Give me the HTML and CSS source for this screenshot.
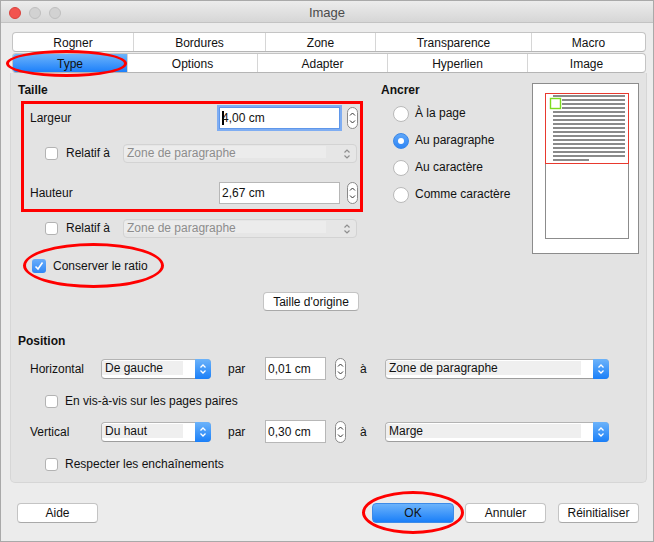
FILE: index.html
```html
<!DOCTYPE html>
<html lang="fr">
<head>
<meta charset="utf-8">
<title>Image</title>
<link rel="stylesheet" href="styles.css">
</head>
<body>
<div class="window">
  <div class="titlebar">
    <div class="lights"><span class="light red"></span><span class="light"></span><span class="light"></span></div>
    <div class="title">Image</div>
    <div></div>
  </div>

  <div class="tabs">
    <div class="tabrow r1">
      <div class="tab">Rogner</div>
      <div class="tab">Bordures</div>
      <div class="tab">Zone</div>
      <div class="tab">Transparence</div>
      <div class="tab">Macro</div>
    </div>
    <div class="tabrow r2">
      <div class="tab active">Type</div>
      <div class="tab">Options</div>
      <div class="tab">Adapter</div>
      <div class="tab">Hyperlien</div>
      <div class="tab">Image</div>
    </div>
  </div>

  <div class="panel">
    <div class="top">
      <section class="taille">
        <div class="h">Taille</div>
        <div class="row r-field first">
          <span class="lbl">Largeur</span>
          <div class="field focus w121"><span class="caret"></span>4,00 cm</div>
          <svg class="stepper" viewBox="0 0 11 22"><rect x="0.5" y="0.5" width="10" height="21" rx="5" fill="#fff" stroke="#8a8a8a"/><polyline points="3,8.5 5.5,6 8,8.5" fill="none" stroke="#333" stroke-width="1"/><polyline points="3,13.5 5.5,16 8,13.5" fill="none" stroke="#333" stroke-width="1"/></svg>
        </div>
        <div class="row r-rel">
          <span class="cb"></span><span class="rel-lbl">Relatif à</span>
          <div class="dsel w234"><span class="dtxt">Zone de paragraphe</span>
            <svg class="dchev" viewBox="0 0 8 12"><polyline points="1.5,4.5 4,2 6.5,4.5" fill="none" stroke="#8e8e8e" stroke-width="1.2"/><polyline points="1.5,7.5 4,10 6.5,7.5" fill="none" stroke="#8e8e8e" stroke-width="1.2"/></svg>
          </div>
        </div>
        <div class="row r-field second">
          <span class="lbl">Hauteur</span>
          <div class="field w121">2,67 cm</div>
          <svg class="stepper" viewBox="0 0 11 22"><rect x="0.5" y="0.5" width="10" height="21" rx="5" fill="#fff" stroke="#8a8a8a"/><polyline points="3,8.5 5.5,6 8,8.5" fill="none" stroke="#333" stroke-width="1"/><polyline points="3,13.5 5.5,16 8,13.5" fill="none" stroke="#333" stroke-width="1"/></svg>
        </div>
        <div class="row r-rel">
          <span class="cb"></span><span class="rel-lbl">Relatif à</span>
          <div class="dsel w234"><span class="dtxt">Zone de paragraphe</span>
            <svg class="dchev" viewBox="0 0 8 12"><polyline points="1.5,4.5 4,2 6.5,4.5" fill="none" stroke="#8e8e8e" stroke-width="1.2"/><polyline points="1.5,7.5 4,10 6.5,7.5" fill="none" stroke="#8e8e8e" stroke-width="1.2"/></svg>
          </div>
        </div>
        <div class="row r-ratio">
          <span class="cb checked"><svg viewBox="0 0 14 14"><polyline points="3.5,7.5 6,10 10.5,3.5" fill="none" stroke="#fff" stroke-width="1.6"/></svg></span>
          <span class="ratio-lbl">Conserver le ratio</span>
        </div>
        <div class="row r-orig">
          <div class="btn orig">Taille d'origine</div>
        </div>
      </section>

      <section class="ancrer">
        <div class="h">Ancrer</div>
        <div class="radio-row"><span class="radio"></span><span class="rlbl">À la page</span></div>
        <div class="radio-row"><span class="radio on"></span><span class="rlbl">Au paragraphe</span></div>
        <div class="radio-row"><span class="radio"></span><span class="rlbl">Au caractère</span></div>
        <div class="radio-row"><span class="radio"></span><span class="rlbl">Comme caractère</span></div>
      </section>

      <svg class="preview" viewBox="0 0 107 171">
        <rect x="0.5" y="0.5" width="106" height="170" fill="#fff" stroke="#8c8c8c"/>
        <rect x="13.5" y="10.5" width="83" height="145" fill="#fff" stroke="#8c8c8c"/>
        <g fill="#8a8a8a">
          <rect x="21" y="12" width="72" height="2"/>
          <rect x="30" y="16" width="63" height="2"/>
          <rect x="30" y="20" width="63" height="2"/>
          <rect x="30" y="24" width="63" height="2"/>
          <rect x="21" y="28" width="72" height="2"/>
          <rect x="21" y="32" width="72" height="2"/>
          <rect x="21" y="36" width="72" height="2"/>
          <rect x="21" y="40" width="72" height="2"/>
          <rect x="21" y="44" width="72" height="2"/>
          <rect x="21" y="48" width="72" height="2"/>
          <rect x="21" y="52" width="72" height="2"/>
          <rect x="21" y="56" width="72" height="2"/>
          <rect x="21" y="60" width="72" height="2"/>
          <rect x="21" y="64" width="72" height="2"/>
          <rect x="21" y="68" width="72" height="2"/>
          <rect x="21" y="72" width="72" height="2"/>
          <rect x="21" y="76" width="36" height="2"/>
        </g>
        <rect x="13.5" y="10.5" width="83" height="70" fill="none" stroke="#e8392e"/>
        <rect x="18.5" y="15.5" width="10" height="10" fill="#fff" stroke="#7ddc1f" stroke-width="1.4"/>
      </svg>
    </div>

    <section class="position">
      <div class="h">Position</div>
      <div class="row p-row first">
        <span class="plbl">Horizontal</span>
        <div class="sel w110"><span class="stxt">De gauche</span>
          <span class="arr"><svg viewBox="0 0 8 12"><polyline points="1.5,4.5 4,2 6.5,4.5" fill="none" stroke="#fff" stroke-width="1.3"/><polyline points="1.5,7.5 4,10 6.5,7.5" fill="none" stroke="#fff" stroke-width="1.3"/></svg></span>
        </div>
        <span class="par">par</span>
        <div class="field w61 tall">0,01 cm</div>
        <svg class="stepper s2" viewBox="0 0 11 22"><rect x="0.5" y="0.5" width="10" height="21" rx="5" fill="#fff" stroke="#8a8a8a"/><polyline points="3,8.5 5.5,6 8,8.5" fill="none" stroke="#333" stroke-width="1"/><polyline points="3,13.5 5.5,16 8,13.5" fill="none" stroke="#333" stroke-width="1"/></svg>
        <span class="a">à</span>
        <div class="sel w224"><span class="stxt">Zone de paragraphe</span>
          <span class="arr"><svg viewBox="0 0 8 12"><polyline points="1.5,4.5 4,2 6.5,4.5" fill="none" stroke="#fff" stroke-width="1.3"/><polyline points="1.5,7.5 4,10 6.5,7.5" fill="none" stroke="#fff" stroke-width="1.3"/></svg></span>
        </div>
      </div>
      <div class="row c-row">
        <span class="cb small"></span><span class="clbl">En vis-à-vis sur les pages paires</span>
      </div>
      <div class="row p-row v">
        <span class="plbl">Vertical</span>
        <div class="sel w110"><span class="stxt">Du haut</span>
          <span class="arr"><svg viewBox="0 0 8 12"><polyline points="1.5,4.5 4,2 6.5,4.5" fill="none" stroke="#fff" stroke-width="1.3"/><polyline points="1.5,7.5 4,10 6.5,7.5" fill="none" stroke="#fff" stroke-width="1.3"/></svg></span>
        </div>
        <span class="par">par</span>
        <div class="field w61 tall">0,30 cm</div>
        <svg class="stepper s2" viewBox="0 0 11 22"><rect x="0.5" y="0.5" width="10" height="21" rx="5" fill="#fff" stroke="#8a8a8a"/><polyline points="3,8.5 5.5,6 8,8.5" fill="none" stroke="#333" stroke-width="1"/><polyline points="3,13.5 5.5,16 8,13.5" fill="none" stroke="#333" stroke-width="1"/></svg>
        <span class="a">à</span>
        <div class="sel w224"><span class="stxt">Marge</span>
          <span class="arr"><svg viewBox="0 0 8 12"><polyline points="1.5,4.5 4,2 6.5,4.5" fill="none" stroke="#fff" stroke-width="1.3"/><polyline points="1.5,7.5 4,10 6.5,7.5" fill="none" stroke="#fff" stroke-width="1.3"/></svg></span>
        </div>
      </div>
      <div class="row c-row">
        <span class="cb small"></span><span class="clbl">Respecter les enchaînements</span>
      </div>
    </section>
  </div>

  <div class="footer">
    <div class="btn fb">Aide</div>
    <div class="btn fb ok">OK</div>
    <div class="btn fb">Annuler</div>
    <div class="btn fb">Réinitialiser</div>
  </div>

  <div class="annot">
    <div class="mark ell type-ell"></div>
    <div class="mark box-mark"></div>
    <div class="mark ell ratio-ell"></div>
    <div class="mark ell ok-ell"></div>
  </div>
</div>
</body>
</html>
```

FILE: styles.css
```css
* { box-sizing: border-box; }
body {
  margin: 0;
  background: #ececec;
  font-family: "Liberation Sans", Arial, sans-serif;
  font-size: 12px;
  color: #111;
}
.window {
  position: relative;
  width: 654px;
  height: 542px;
  border: 1px solid #a9a9a9;
  background: #ececec;
  overflow: hidden;
}
.titlebar {
  height: 22px;
  padding-top: 2px;
  background: linear-gradient(#ececec, #d6d6d6);
  border-bottom: 1px solid #c3c3c3;
  display: grid;
  grid-template-columns: 1fr auto 1fr;
  align-items: center;
}
.lights { display: flex; gap: 8px; margin-left: 8px; }
.light {
  width: 12px; height: 12px; border-radius: 50%;
  background: #d2d2d2; border: 1px solid #bfbfbf;
}
.light.red { background: #f2544f; border-color: #d9423d; }
.title { font-size: 13px; color: #4b4b4b; }

.tabs { margin: 9px 0 0 11px; width: 634px; }
.tabrow {
  display: flex;
  height: 20px;
  background: #fff;
  border: 1px solid #c4c4c4;
  border-bottom-color: #b5b5b5;
  border-radius: 4px;
  overflow: hidden;
}
.tabrow + .tabrow { margin-top: 1px; }
.tab {
  display: flex; align-items: center; justify-content: center;
  border-left: 1px solid #d6d6d6;
  color: #111;
  padding-top: 1px;
}
.tab:first-child { border-left: 0; }
.r1 .tab:nth-child(1) { width: 120px; }
.r1 .tab:nth-child(2) { width: 132px; }
.r1 .tab:nth-child(3) { width: 110px; }
.r1 .tab:nth-child(4) { width: 156px; }
.r1 .tab:nth-child(5) { width: 114px; }
.r2 .tab:nth-child(1) { width: 114px; }
.r2 .tab:nth-child(2) { width: 130px; }
.r2 .tab:nth-child(3) { width: 130px; }
.r2 .tab:nth-child(4) { width: 140px; }
.r2 .tab:nth-child(5) { width: 118px; }
.tab.active { background: linear-gradient(#6db4fb, #1d80fa); }

.panel {
  margin-left: 9px;
  width: 637px;
  height: 410px;
  background: #e3e3e3;
  border: 1px solid #d6d6d6;
  border-top: 0;
  border-radius: 0 0 5px 5px;
  padding: 10px 0 0 7px;
}
.top { display: flex; }
.taille { width: 363px; }
.ancrer { width: 151px; }
.preview { width: 107px; height: 171px; display: block; }
.h { font-weight: bold; height: 14px; line-height: 14px; }

.row { display: flex; align-items: center; }
.r-field { height: 22px; }
.r-field.first { margin-top: 10px; }
.r-field.second { margin-top: 19px; }
.lbl { margin-left: 12px; width: 189px; }
.field {
  height: 22px;
  background: #fff;
  border: 1px solid #b7b7b7;
  display: flex; align-items: center;
  padding-left: 2px;
}
.field.tall { height: 23px; }
.field.focus { border-color: #5f97ea; box-shadow: 0 0 0 2px #7fadf2; }
.w121 { width: 121px; }
.w61 { width: 61px; }
.caret { display: inline-block; width: 2px; height: 14px; background: #000; margin-right: -2px; }
.stepper { width: 11px; height: 22px; margin-left: 7px; flex: none; }
.stepper.s2 { margin-left: 9px; }

.r-rel { margin-top: 15px; height: 19px; }
.cb {
  width: 13px; height: 13px; flex: none;
  background: #fff;
  border: 1px solid #b3b3b3;
  border-radius: 3px;
  margin-left: 27px;
}
.cb.small { width: 13px; height: 13px; }
.rel-lbl { margin-left: 8px; width: 57px; margin-top: -1px; }
.dsel {
  height: 19px;
  display: flex; align-items: center;
  background: linear-gradient(#ececec, #ececec) no-repeat 0 1px / calc(100% - 30px) calc(100% - 5px), #e6e6e6;
  border: 1px solid #d3d3d3;
  border-radius: 4px;
  color: #8c8c8c;
  padding-left: 3px;
}
.w234 { width: 234px; }
.dtxt { flex: 1; margin-top: -1px; }
.dchev { width: 8px; height: 12px; margin-right: 5px; }

.r-ratio { margin-top: 21px; height: 14px; }
.cb.checked {
  width: 14px; height: 14px; margin-left: 14px;
  border: 0;
  background: linear-gradient(#6aaefa, #2f87f6);
}
.cb.checked svg { width: 14px; height: 14px; display: block; }
.ratio-lbl { margin-left: 7px; margin-top: -1px; }
.r-orig { margin-top: 19px; }
.btn {
  height: 19px;
  background: #fff;
  border: 1px solid #c4c4c4;
  border-bottom-color: #a9a9a9;
  border-radius: 4px;
  display: flex; align-items: center; justify-content: center;
}
.orig { margin-left: 245px; width: 96px; }

.radio-row { display: flex; align-items: center; height: 16px; margin-top: 11px; }
.h + .radio-row { margin-top: 9px; }
.radio {
  width: 16px; height: 16px; border-radius: 50%;
  background: #fff; border: 1px solid #b9b9b9;
  margin-left: 12px;
  flex: none;
  display: flex; align-items: center; justify-content: center;
}
.radio.on { background: linear-gradient(#5ea6f9, #2f86f6); border-color: #3a87e6; }
.radio.on::after { content: ""; width: 6px; height: 6px; border-radius: 50%; background: #fff; }
.rlbl { margin-left: 6px; margin-top: -2px; }

.position { margin-top: 23px; }
.p-row { height: 23px; }
.p-row.first { margin-top: 9px; }
.p-row.v { margin-top: 12px; }
.plbl { margin-left: 12px; width: 71px; }
.sel {
  height: 20px;
  display: flex; align-items: stretch;
  background: #fff;
  border: 1px solid #b3b3b3;
  border-bottom-color: #9d9d9d;
  border-radius: 4px;
}
.w110 { width: 110px; }
.w224 { width: 224px; }
.stxt {
  flex: 1;
  display: flex; align-items: center;
  background: #efefef;
  margin: 1px 12px 3px 0;
  padding-left: 3px;
  line-height: 14px;
}
.arr {
  width: 16px;
  margin: -1px -1px -1px 0;
  background: linear-gradient(#6cb3fa, #1a7ff8);
  border-radius: 0 4px 4px 0;
  display: flex; align-items: center; justify-content: center;
}
.arr svg { width: 8px; height: 12px; }
.par { margin-left: 17px; width: 37px; }
.a { margin-left: 14px; width: 25px; }
.c-row { margin-top: 15px; height: 13px; }
.clbl { margin-left: 7px; margin-top: -1px; }

.footer {
  display: flex;
  margin-top: 20px;
  padding: 0 14px 0 16px;
}
.fb { width: 81px; height: 20px; }
.fb.ok { margin-left: auto; width: 82px; background: linear-gradient(#6cb3fb, #1a7ff8); border-color: #3d8be8; }
.fb + .fb { margin-left: 11px; }
.fb.ok + .fb + .fb { margin-left: 12px; }
.fb.ok { margin-left: auto; }

.annot {
  position: absolute;
  left: -1px; top: -1px;
  width: 654px; height: 542px;
  pointer-events: none;
}
.mark { position: absolute; border: 3px solid #f00; }
.ell { border-radius: 50%; }
.type-ell { left: 6px; top: 50px; width: 121px; height: 27px; }
.box-mark { left: 21px; top: 101px; width: 342px; height: 111px; }
.ratio-ell { left: 23px; top: 243px; width: 141px; height: 45px; }
.ok-ell { left: 362px; top: 491px; width: 102px; height: 43px; }
```
